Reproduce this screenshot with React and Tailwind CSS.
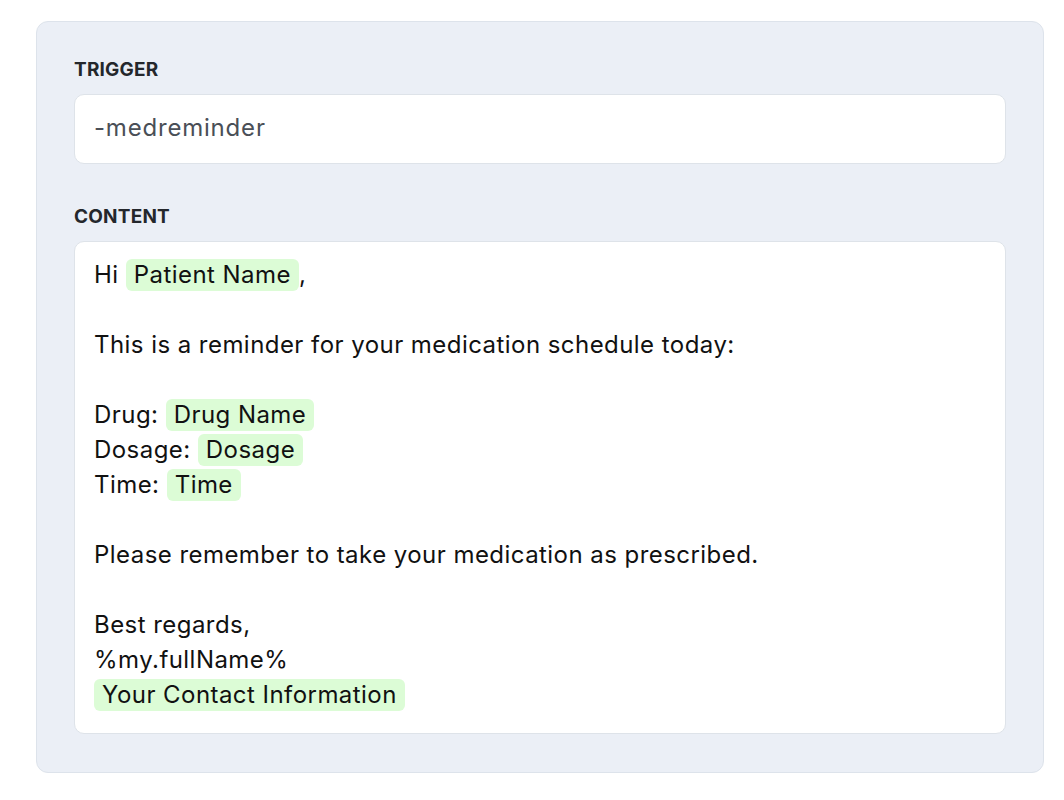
import React from 'react';

function Chip({ children }) {
  return (
    <span className="inline-block rounded-md bg-[#dcfcd6] px-[8px] leading-[32px]">{children}</span>
  );
}

const Blank = () => <div className="h-[35px]" />;

export default function App() {
  return (
    <div className="min-h-[800px] bg-white pt-[21px] pl-[36px] pr-[20px] font-['Inter',sans-serif]">
      <div className="w-[1008px] rounded-xl border border-[#dde3eb] bg-[#ebeff6] px-[37px] pt-[35px] pb-[38px]">
        <label className="block text-[19px] font-bold leading-[26px] tracking-[0.2px] text-[#24272c]">TRIGGER</label>
        <div className="mt-[11px] flex h-[70px] items-center rounded-[10px] border border-[#dee3e9] bg-white px-[19px] pb-[3px] text-[24px] tracking-[0.8px] text-[#4a4f57]">
          -medreminder
        </div>

        <label className="mt-[40px] block text-[19px] font-bold leading-[26px] tracking-[0.2px] text-[#24272c]">CONTENT</label>
        <div className="mt-[11px] rounded-[10px] border border-[#dee3e9] bg-white px-[19px] pt-[15px] pb-[21px] text-[24px] leading-[35px] tracking-[0.45px] text-[#111]">
          <div>
            Hi <Chip>Patient Name</Chip>,
          </div>
          <Blank />
          <div>This is a reminder for your medication schedule today:</div>
          <Blank />
          <div>
            Drug: <Chip>Drug Name</Chip>
          </div>
          <div>
            Dosage: <Chip>Dosage</Chip>
          </div>
          <div>
            Time: <Chip>Time</Chip>
          </div>
          <Blank />
          <div>Please remember to take your medication as prescribed.</div>
          <Blank />
          <div>Best regards,</div>
          <div>%my.fullName%</div>
          <div>
            <Chip>Your Contact Information</Chip>
          </div>
        </div>
      </div>
    </div>
  );
}
